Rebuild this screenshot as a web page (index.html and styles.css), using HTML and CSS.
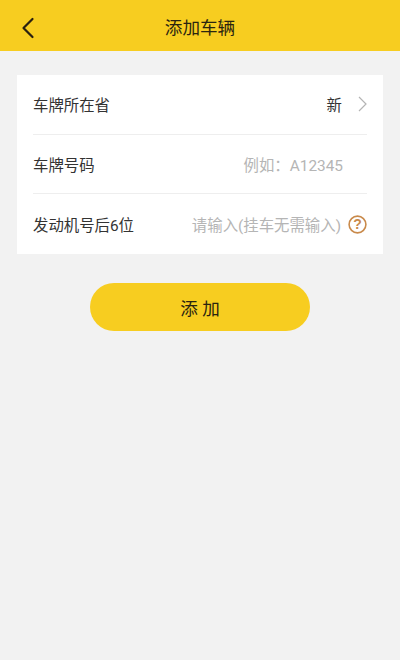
FILE: index.html
```html
<!DOCTYPE html>
<html lang="zh">
<head>
<meta charset="utf-8">
<title>添加车辆</title>
<link rel="stylesheet" href="styles.css">
</head>
<body>
<header class="topbar">
  <svg class="back" width="14" height="22" viewBox="0 0 14 22"><path d="M11.5 2 L2.5 11 L11.5 20" fill="none" stroke="#2a2010" stroke-width="2.2" stroke-linecap="round" stroke-linejoin="round"/></svg>
  <h1 class="title">添加车辆</h1>
</header>
<main class="content">
  <section class="card">
    <div class="row">
      <span class="label">车牌所在省</span>
      <span class="value">新</span>
      <svg class="chevron" width="9" height="16" viewBox="0 0 9 16"><path d="M1 1 L8 8 L1 15" fill="none" stroke="#b4b4b4" stroke-width="1.2"/></svg>
    </div>
    <div class="row">
      <span class="label">车牌号码</span>
      <span class="hint hint-plate">例如：A12345</span>
    </div>
    <div class="row">
      <span class="label">发动机号后6位</span>
      <span class="hint">请输入(挂车无需输入)</span>
      <svg class="help" width="19" height="19" viewBox="0 0 19 19"><circle cx="9.5" cy="9.5" r="8.4" fill="none" stroke="#c98a4b" stroke-width="1.6"/><text x="9.5" y="14.2" text-anchor="middle" class="help-mark">?</text></svg>
    </div>
  </section>
  <button class="submit" type="button">添 加</button>
</main>
</body>
</html>
```

FILE: styles.css
```css
* { box-sizing: border-box; }
html, body { margin: 0; height: 100%; }
body {
  background: #f2f2f2;
  font-family: Roboto, "Noto Sans CJK SC", sans-serif;
  color: #333;
}
.topbar {
  height: 51px;
  background: #f7cd20;
  display: flex;
  align-items: center;
  justify-content: center;
  position: relative;
}
.back { position: absolute; left: 21px; top: 17px; }
.title { margin: 1px 0 0; font-size: 17.6px; font-weight: 400; color: #2a2410; }
.content { padding: 24px 17px 0; display: flex; flex-direction: column; align-items: center; }
.card { width: 100%; background: #fff; padding: 0 16px; }
.row {
  height: 59.7px;
  display: flex;
  align-items: center;
  border-bottom: 1px solid #eeeeee;
}
.row:last-child { border-bottom: 0; }
.label { font-size: 15.4px; color: #333; flex: 1; }
.value { font-size: 15.4px; color: #333; margin-right: 16px; }
.hint { font-size: 15.4px; color: #b5b5b5; }
.hint-plate { margin-right: 24px; }
.help { margin-left: 7px; }
.help-mark { font-family: "Liberation Sans", sans-serif; font-size: 14px; font-weight: 700; fill: #c98a4b; }
.submit {
  margin-top: 29px;
  width: 220px;
  height: 48px;
  border: 0;
  border-radius: 24px;
  background: #f7cd20;
  font-family: inherit;
  font-size: 17.6px;
  color: #2a2410;
}
```
